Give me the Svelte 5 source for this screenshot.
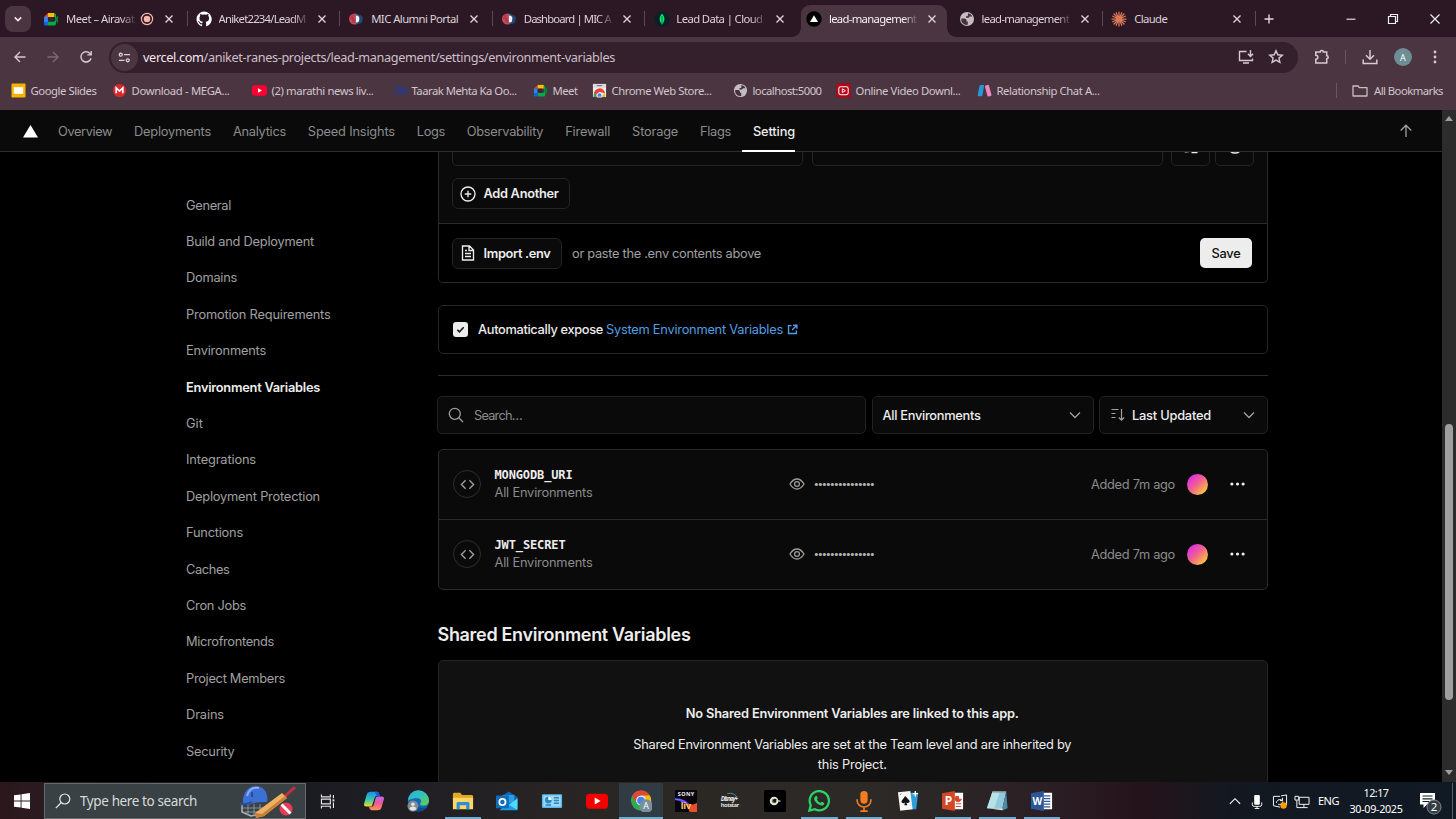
<script>
  // Tracks a text run out to a given width in pixels.
  function fit(node, width) {
    node.style.letterSpacing = '0px';
    const natural = node.getBoundingClientRect().width;
    node.style.letterSpacing = (width - natural) / node.textContent.length + 'px';
  }

  const tabs = [
    { icon: 'meet', title: 'Meet – Airavat', w: 68.5, rec: true },
    { icon: 'github', title: 'Aniket2234/LeadM', w: 87 },
    { icon: 'mic', title: 'MIC Alumni Portal', w: 87 },
    { icon: 'mic', title: 'Dashboard | MIC A', w: 87 },
    { icon: 'mongo', title: 'Lead Data | Cloud', w: 86 },
    { icon: 'vercel', title: 'lead-management', w: 87.5, active: true },
    { icon: 'globe', title: 'lead-management', w: 87.5 },
    { icon: 'claude', title: 'Claude', w: 33 }
  ];
  const bookmarks = [
    { icon: 'slides', title: 'Google Slides', w: 66 },
    { icon: 'mega', title: 'Download - MEGA...', w: 98 },
    { icon: 'youtube', title: '(2) marathi news liv...', w: 102 },
    { icon: 'taarak', title: 'Taarak Mehta Ka Oo...', w: 105 },
    { icon: 'meet', title: 'Meet', w: 25 },
    { icon: 'store', title: 'Chrome Web Store...', w: 100 },
    { icon: 'globe', title: 'localhost:5000', w: 69 },
    { icon: 'video', title: 'Online Video Downl...', w: 105 },
    { icon: 'relation', title: 'Relationship Chat A...', w: 103 }
  ];
  const nav = [
    ['Overview', 54], ['Deployments', 77], ['Analytics', 53], ['Speed Insights', 87], ['Logs', 28],
    ['Observability', 76.5], ['Firewall', 45], ['Storage', 46], ['Flags', 31], ['Setting', 42]
  ];
  const side = [
    ['General', 45], ['Build and Deployment', 128], ['Domains', 51], ['Promotion Requirements', 144.5],
    ['Environments', 80], ['Environment Variables', 134], ['Git', 17], ['Integrations', 70],
    ['Deployment Protection', 134], ['Functions', 57], ['Caches', 43.5], ['Cron Jobs', 60],
    ['Microfrontends', 88], ['Project Members', 99], ['Drains', 38], ['Security', 48.5]
  ];
  const vars = [
    { name: 'MONGODB_URI', w: 78 },
    { name: 'JWT_SECRET', w: 71 }
  ];
  const apps = [
    { icon: 'copilot' }, { icon: 'edge' }, { icon: 'files', open: true }, { icon: 'outlook' },
    { icon: 'panel' }, { icon: 'yt' }, { icon: 'chrome', open: true, focus: true }, { icon: 'sony' },
    { icon: 'hotstar' }, { icon: 'cursor' }, { icon: 'whatsapp', open: true }, { icon: 'voice', open: true },
    { icon: 'cards' }, { icon: 'ppt', open: true }, { icon: 'notes', open: true }, { icon: 'word', open: true }
  ];
</script>

{#snippet favicon(name)}
  <svg class="fav" viewBox="0 0 16 16">
    {#if name === 'meet'}
      <path d="M1 6l4-4v4z" fill="#ea4335" /><path d="M5 2h6.500v4H5z" fill="#fbbc04" />
      <path d="M1 6h4v5H1z" fill="#2684fc" /><path d="M1 11h4v3.500H2.500Q1 14.500 1 13z" fill="#1565d8" />
      <path d="M5 10.500h6.500l1-2.500-1-2V3.500Q13 2 13 4v8.500q0 2-1.500 2H5z" fill="#00ac47" />
      <path d="M11.500 8L15 4.500v8z" fill="#00832d" /><path d="M5 6h5v4.500H5z" fill="#3b2430" />
    {:else if name === 'github'}
      <path fill="#fff" d="M8 .6a7.500 7.500 0 0 0-2.400 14.600c.4.1.5-.2.500-.4v-1.500c-2 .5-2.600-.8-2.700-1.200-.1-.3-.5-1-.9-1.200-.3-.2-.7-.6 0-.6.700 0 1.200.6 1.400.9.800 1.300 2 1 2.500.7.100-.5.300-.9.500-1.100-1.800-.2-3.500-.9-3.500-3.800 0-.8.3-1.500.8-2 0-.2-.3-1 .1-2 0 0 .6-.2 2.100.8a7 7 0 0 1 3.700 0c1.500-1 2.100-.8 2.100-.8.4 1 .1 1.800.1 2 .5.500.8 1.200.8 2 0 2.900-1.800 3.600-3.500 3.800.3.200.5.700.5 1.500v2.500c0 .2.100.5.500.4A7.500 7.500 0 0 0 8 .6z" />
    {:else if name === 'mic'}
      <circle cx="6.500" cy="8" r="5.500" fill="#d04757" /><path d="M8 2.500a5.600 5.600 0 0 1 0 11z" fill="#245a8d" />
      <path d="M8 4.500a3.500 3.500 0 0 1 0 7z" fill="#eef4fa" /><path d="M12 3.500l3 3-1 5-3 1.500z" fill="#1f4972" />
      <path d="M3 4l4 8M5 3v9M2 7l5 2" stroke="#8f3850" stroke-width=".8" />
    {:else if name === 'mongo'}
      <circle cx="8" cy="8" r="7.500" fill="#0a1f27" /><path d="M8 2.500q5 5.500 0 11-5-5.500 0-11z" fill="#00ed64" /><path d="M8 5v9" stroke="#00684a" stroke-width=".8" />
    {:else if name === 'vercel'}
      <circle cx="8" cy="8" r="7.700" fill="#000" /><path d="M8 4.200l4 6.800H4z" fill="#fff" />
    {:else if name === 'globe'}
      <circle cx="8" cy="8" r="7" fill="#c6bdc3" />
      <path d="M2.300 7.500h3.200q2 0 2 2v1h1.300v3.300Q5 14.500 3 11.500 2 9.500 2.300 7.500zM9 2.200q3.200.5 4.400 3.300H11q-1 0-1 1.300H7V5.200h1.300Q9 5 9 4z" fill="#45303c" />
    {:else if name === 'claude'}
      <path d="M8 1v14M1 8h14M3 3l10 10M13 3L3 13M5.200 1.700l5.600 12.600M1.700 5.200l12.600 5.600M10.800 1.700L5.200 14.300M14.300 5.200L1.700 10.800" stroke="#d97757" stroke-width="1.250" stroke-linecap="round" />
    {:else if name === 'slides'}
      <rect x=".5" y=".5" width="15" height="15" rx="1" fill="#f4b400" /><rect x="3" y="4.500" width="10" height="7" fill="#fff" />
    {:else if name === 'mega'}
      <circle cx="8" cy="8" r="7" fill="#d9272e" /><path d="M4.500 11V5.200L8 8.600l3.500-3.400V11" fill="none" stroke="#fff" stroke-width="1.800" />
    {:else if name === 'youtube'}
      <rect x="0" y="2.500" width="16" height="11" rx="3" fill="#f03" /><path d="M6.300 5.500v5L10.700 8z" fill="#fff" />
    {:else if name === 'taarak'}
      <path d="M1 4h5M4 4v7l-2 2M6 6l3 6 2-8 3 2v7M9 5l-1 7M12 7l2 1" stroke="#293a88" stroke-width="1.700" fill="none" />
    {:else if name === 'store'}
      <path d="M1 1h14v14H1z" fill="#eee" /><path d="M1 1h14v4H1z" fill="#dcdcdc" /><rect x="5" y="2" width="6" height="1.500" rx=".7" fill="#8c7c83" />
      <path d="M2 15V12.500a6 6 0 0 1 12-1.500L8 9.500z" fill="#ea4335" /><path d="M2.500 10L6 15H1.500z" fill="#34a853" /><path d="M13.500 10L10 15h4.500z" fill="#fbbc04" /><path d="M5.500 15v-2a2.500 2.500 0 0 1 5 0v2z" fill="#4285f4" stroke="#fff" stroke-width=".8" />
    {:else if name === 'video'}
      <rect x=".5" y=".5" width="15" height="15" fill="#b80018" /><rect x="3" y="4" width="10" height="8.500" rx="2" fill="none" stroke="#fff" stroke-width="1.100" /><path d="M6.700 6.200v4l3.300-2z" fill="none" stroke="#fff" />
    {:else if name === 'relation'}
      <path d="M2.600 3.200Q3 2 4.200 2h2.300q1.300 0 1 1.300L5.800 13q-.3 1.200-1.500 1.200H1.800Q.5 14.200.8 13z" fill="#2499d6" /><path d="M8.600 4.200Q8.200 3 9.300 2.600l2-.6q1.200-.3 1.500.8l2.600 9.500q.3 1.200-.8 1.500l-2 .5q-1.200.3-1.500-.8z" fill="#f088bd" />
    {/if}
  </svg>
{/snippet}

{#snippet cross()}
  <svg class="x" viewBox="0 0 10 10"><path d="M1.500 1.500l7 7M8.500 1.500l-7 7" stroke="#ddd2d9" stroke-width="1.400" /></svg>
{/snippet}

{#snippet chev()}
  <svg width="14" height="14" viewBox="0 0 14 14" fill="none" stroke="#a1a1a1" stroke-width="1.300"><path d="M2 4.500l5 5 5-5" /></svg>
{/snippet}

{#snippet app(name)}
  <svg class="app" viewBox="0 0 24 24">
    {#if name === 'copilot'}
      <defs>
        <linearGradient id="cpA" x1="0" y1="0" x2="0" y2="1"><stop offset="0" stop-color="#1b8ff0" /><stop offset=".5" stop-color="#2fc6b4" /><stop offset="1" stop-color="#e8dc2c" /></linearGradient>
        <linearGradient id="cpB" x1="0" y1="0" x2="0" y2="1"><stop offset="0" stop-color="#b76cf2" /><stop offset=".5" stop-color="#f0559a" /><stop offset="1" stop-color="#fb9a4b" /></linearGradient>
      </defs>
      <path d="M8 2h7q2 0 2.500 2l.6 2.500h-3.200q-1.500 0-2 1.600L10 16.500q-.5 1.500-2.500 1.500H3.500Q.5 18 1.200 15L4 4.800Q4.800 2 8 2z" fill="url(#cpA)" />
      <path d="M13 2h2.500q1.500.4 2 2l.6 2.500h-3.200z" fill="#225fd0" />
      <path d="M16 22H9.500q-2 0-2.500-2l-.5-2h3q1.500 0 2-1.500l2.400-8Q14.400 7 16.400 7H20.500q3 0 2.300 3L20 19.500Q19.200 22 16 22z" fill="url(#cpB)" />
    {:else if name === 'edge'}
      <defs><linearGradient id="edA" x1="0" y1="0" x2="1" y2="1"><stop offset="0" stop-color="#25b3df" /><stop offset=".5" stop-color="#35c1b5" /><stop offset="1" stop-color="#68d13c" /></linearGradient></defs>
      <circle cx="12.500" cy="12" r="11.500" fill="#1267ba" /><path d="M1 12A11.500 11.500 0 0 1 24 11.500c0 4-3 5.500-6 5.500-3.500 0-4.500-1.800-3-3.500.9-1 .7-4-3-4.500C6 8.500 1.500 11 1 12z" fill="url(#edA)" />
      <path d="M9 12c0 6 5 8.500 12 7-3 4-9 5.500-13 2.500s-3-9.500 1-9.500z" fill="#0c4a91" />
      <circle cx="6.500" cy="17.500" r="6" fill="#7f8b91" /><circle cx="6.500" cy="15.500" r="2" fill="#e3e3e3" /><path d="M2.800 21q0-3 3.700-3t3.700 3q-3.700 3-7.400 0z" fill="#e3e3e3" />
    {:else if name === 'files'}
      <path d="M1 4.500Q1 3 2.500 3H9l2 2.500h10.500Q23 5.500 23 7v4H1z" fill="#e5a823" /><path d="M1 8.500h22V21H1z" fill="#ffd766" /><path d="M5 21v-6.500Q5 13 6.500 13h11q1.500 0 1.500 1.500V21h-3.500v-4.500h-7V21z" fill="#2c8fd5" />
    {:else if name === 'outlook'}
      <path d="M4 8L14 1.500 23.500 8v11H4z" fill="#1066b5" /><path d="M7 5.500h13V14H7z" fill="#2a9fe0" /><path d="M4 21.500h19.500V9L14 16z" fill="#50d9ff" /><path d="M4 22l10-6 9.500 6z" fill="#1a9be4" />
      <rect x="0" y="6" width="14" height="14" rx="1" fill="#0f6cbd" /><circle cx="7" cy="13" r="3.400" fill="none" stroke="#fff" stroke-width="1.900" />
    {:else if name === 'panel'}
      <rect x="1" y="4.500" width="22" height="15" rx="1" fill="#5cb6e5" /><rect x="2.500" y="6" width="19" height="12" fill="#9ad8f5" /><circle cx="8" cy="11" r="3.700" fill="#2a89c9" /><path d="M8 11V7.300A3.700 3.700 0 0 1 11.700 11z" fill="#f2f8fb" /><path d="M14 8.500h5.500M14 11.500h5.500M14 14.500h5.500M5 16.300h6" stroke="#2583bd" stroke-width="1.500" />
    {:else if name === 'yt'}
      <rect x="0" y="4" width="24" height="16.500" rx="4" fill="#f40000" /><path d="M9.500 8.300v7.500l6.500-3.700z" fill="#fff" />
    {:else if name === 'chrome'}
      <circle cx="12" cy="11.500" r="11" fill="#34a853" /><path d="M2.500 6A11 11 0 0 1 21.600 6H12z" fill="#ea4335" /><path d="M21.600 6A11 11 0 0 1 12 22.500L16.800 14 12 6z" fill="#fbbc04" /><path d="M2.500 6L7.300 14.500 12 6z" fill="#ea4335" /><circle cx="12" cy="11.500" r="5.300" fill="#fff" /><circle cx="12" cy="11.500" r="4.200" fill="#4285f4" />
      <circle cx="17.500" cy="17.500" r="7.500" fill="#78909c" /><text x="17.500" y="21" text-anchor="middle" font-size="9.500" fill="#fff">A</text>
    {:else if name === 'sony'}
      <rect x="0" y="0" width="24" height="24" fill="#08050f" /><text x="12" y="7" text-anchor="middle" font-size="6" font-weight="700" fill="#eee" textLength="18">SONY</text>
      <path d="M0 9q10 0 14 5 4 4 10 1v9H17Q13 13 0 11z" fill="#7a2be5" /><path d="M12 14q7 4 12 0v10h-8z" fill="#e74f2d" /><path d="M0 10q8 0 13 5" stroke="#36a0ff" fill="none" /><text x="12" y="21" text-anchor="middle" font-size="10" font-weight="700" fill="#ffc95c">liv</text>
    {:else if name === 'hotstar'}
      <text x="11.500" y="12.500" text-anchor="middle" font-size="7" font-weight="700" font-style="italic" fill="#e3e3e3" textLength="19">Disney+</text><text x="12" y="19" text-anchor="middle" font-size="6.500" font-weight="700" fill="#ddd" textLength="20">hotstar</text><path d="M9 4q8-2 11 5" stroke="#3d9bb3" fill="none" />
    {:else if name === 'cursor'}
      <rect x="0" y="0" width="24" height="24" rx="2" fill="#000" /><circle cx="11" cy="12" r="3.600" fill="#6d7a3d" stroke="#e6e6dc" stroke-width="2.200" /><circle cx="12" cy="11.500" r="2" fill="#111" /><path d="M13 12h5" stroke="#eee" stroke-width="1.200" />
    {:else if name === 'whatsapp'}
      <path d="M1.500 22.500l1.500-6A10.500 10.500 0 1 1 7.500 21z" fill="none" stroke="#2bd366" stroke-width="2.400" /><path d="M8.300 6.500c.8-.5 1.200-.2 1.500.6l.7 1.700c.2.600-.8 1.200-.7 1.600.7 1.700 2 2.900 3.800 3.600.5.100 1-.9 1.600-1.100l2.100 1c.6.300.4 1.400-.2 2.100-1.600 1.700-4.200.8-6.400-.7s-4.400-4.200-4-6.300c.2-1 .8-1.900 1.600-2.500z" fill="#2bd366" />
    {:else if name === 'voice'}
      <rect x="8" y="1" width="8" height="14" rx="4" fill="#f47b20" /><path d="M4.500 10v1.500a7.500 7 0 0 0 15 0V10M12 18.500V23M8 23h8" fill="none" stroke="#f47b20" stroke-width="1.800" />
    {:else if name === 'cards'}
      <path d="M9 3h14l-2 18H9z" fill="#2e9edb" /><path d="M1 2.500L14.500 1 17 21 3.500 22.500z" fill="#f6f6f6" /><path d="M9 6.500l4.500 5c1 2-1.500 3.500-3.300 2l1 3H8l.6-3c-1.500 1.800-4.300.6-3.600-1.500z" fill="#111" /><path d="M20 1v6M17 4h6" stroke="#fff" stroke-width="1.500" /><path d="M3.500 5l1-1" stroke="#111" />
    {:else if name === 'ppt'}
      <path d="M12 3h11v18H12z" fill="#fff" /><path d="M15 7h3v3h3a3.500 3.500 0 1 1-6-3zM15 15h6M15 18h6" fill="#d24726" stroke="#d24726" /><path d="M0 3.500L14 1v22L0 20.500z" fill="#d24726" /><text x="7" y="16.500" text-anchor="middle" font-size="13" font-weight="700" fill="#fff">P</text>
    {:else if name === 'notes'}
      <path d="M7 2h15l-4 18H1z" fill="#92cadb" /><path d="M7 2h8L9 20H1z" fill="#b7e2e8" /><path d="M1 20h17l4-18 1.500 18-5 2z" fill="#4a8aa8" /><path d="M2 20h16v2z" fill="#e5e9dd" /><path d="M7 2h15" stroke="#8c9594" stroke-width="1.500" />
    {:else if name === 'word'}
      <path d="M12 3h11v18H12z" fill="#fff" /><path d="M14 6.500h7M14 9.500h7M14 12.500h7M14 15.500h7M14 18.500h7" stroke="#2b579a" stroke-width="1.300" /><path d="M0 3.500L14 1v22L0 20.500z" fill="#2b579a" /><text x="7" y="16" text-anchor="middle" font-size="11" font-weight="700" fill="#fff">W</text>
    {/if}
  </svg>
{/snippet}

<div class="screen">
  <header class="chrome">
    <div class="strip">
      <div class="tabsearch"><svg width="10" height="10" viewBox="0 0 10 10"><path d="M1.800 3.400L5 6.600l3.200-3.200" fill="none" stroke="#f0e6ec" stroke-width="1.600" /></svg></div>
      <div class="tabs">
        {#each tabs as t, i}
          <div class="tab" class:active={t.active} class:line={i !== 4 && i !== 5}>
            {@render favicon(t.icon)}
            <div class="title"><span use:fit={t.w}>{t.title}</span></div>
            {#if t.rec}
              <svg class="rec" viewBox="0 0 14 14"><circle cx="7" cy="7" r="5.600" fill="none" stroke="#f4b5ab" stroke-width="1.200" /><circle cx="7" cy="7" r="3.300" fill="#f4b5ab" /></svg>
            {/if}
            {@render cross()}
          </div>
        {/each}
      </div>
      <svg class="plus" viewBox="0 0 12 12"><path d="M6 1.500v9M1.500 6h9" stroke="#e3d8df" stroke-width="1.400" /></svg>
      <div class="win">
        <svg viewBox="0 0 12 12"><path d="M1.500 6.200h9" stroke="#eee" stroke-width="1.100" /></svg>
        <svg viewBox="0 0 12 12"><path d="M1.500 3.500h7v7h-7zM3.500 3.500v-2h7v7h-2" fill="none" stroke="#eee" stroke-width="1.200" /></svg>
        <svg viewBox="0 0 12 12"><path d="M1.500 1.500l9 9M10.500 1.500l-9 9" stroke="#eee" stroke-width="1.200" /></svg>
      </div>
    </div>
    <div class="toolbar">
      <div class="arrows">
        <svg viewBox="0 0 16 16" stroke="#d6c9d1"><path d="M13.500 8H3M8 3L3 8l5 5" /></svg>
        <svg viewBox="0 0 16 16" stroke="#7d6a75"><path d="M2.500 8H13M8 3l5 5-5 5" /></svg>
        <svg viewBox="0 0 16 16" stroke="#d6c9d1"><path d="M13 9.200A5.100 5.100 0 1 1 11.700 4.300L13 5.600M13.200 2v3.900H9.300" /></svg>
      </div>
      <div class="omni">
        <div class="info"><svg viewBox="0 0 14 14"><path d="M6.500 4H13M1 10h6" /><circle cx="3" cy="4" r="1.600" /><circle cx="10.500" cy="10" r="1.600" /></svg></div>
        <span class="url" use:fit={472}><b>vercel.com</b>/aniket-ranes-projects/lead-management/settings/environment-variables</span>
        <svg class="oi push" viewBox="0 0 16 16"><path d="M8.500 2.500h-7v9h13V9.500M5 14h6M12.500 1v6M9.900 4.800l2.600 2.600 2.600-2.600" /></svg>
        <svg class="oi" viewBox="0 0 16 16"><path d="M8 1.800l1.800 4 4.400.4-3.300 2.900 1 4.300L8 11.100l-3.900 2.300 1-4.300-3.300-2.900 4.400-.4z" /></svg>
      </div>
      <div class="tools">
        <svg viewBox="0 0 16 16"><path d="M1.800 3h4.400a1.600 1.600 0 0 1 3.200 0h3.300v3.700a1.500 1.500 0 0 1 0 3v4.300H1.800v-3.800a2 2 0 0 0 0-4z" /></svg>
        <i></i>
        <svg viewBox="0 0 16 16"><path d="M8 1v9M4 6.300l4 4 4-4M1.200 10.500v4h13.600v-4" /></svg>
        <span class="avatar">A</span>
        <svg class="kebab" viewBox="0 0 16 16"><circle cx="8" cy="3" r="1.400" /><circle cx="8" cy="8" r="1.400" /><circle cx="8" cy="13" r="1.400" /></svg>
      </div>
    </div>
    <div class="bookmarks">
      {#each bookmarks as b}
        <div class="bm">{@render favicon(b.icon)}<span use:fit={b.w}>{b.title}</span></div>
      {/each}
      <div class="all">
        <svg viewBox="0 0 16 14"><path d="M1 2h5l1.500 1.700H15V12H1z" fill="none" stroke="#c9bcc4" stroke-width="1.300" stroke-linejoin="round" /></svg>
        <span use:fit={69}>All Bookmarks</span>
      </div>
    </div>
  </header>

  <div class="view">
    <div class="page">
      <nav>
        <svg class="logo" viewBox="0 0 15 13"><path d="M7.500 0L15 12.500H0z" fill="#fff" /></svg>
        {#each nav as [label, w], i}
          <span class="item" class:on={i === nav.length - 1}><span use:fit={w}>{label}</span></span>
        {/each}
        <svg class="up" viewBox="0 0 14 14"><path d="M7 13V1.500M1.700 6.500L7 1.200l5.300 5.300" fill="none" stroke="#a0a0a0" stroke-width="1.300" /></svg>
      </nav>
      <div class="cols">
        <aside>
          {#each side as [label, w]}
            <div class:cur={label === 'Environment Variables'}><span use:fit={w}>{label}</span></div>
          {/each}
        </aside>
        <main>
          <section class="editor">
            <div class="upper">
              <div class="fields">
                <div class="field"></div>
                <div class="field"></div>
                <div class="sq"><svg viewBox="0 0 16 16"><path d="M4 2v8.500M1.800 12.700l3.200-.2v-3" /><path d="M8.500 13.300h6" stroke-width="2" /></svg></div>
                <div class="sq"><svg viewBox="0 0 16 16"><circle cx="8" cy="7.500" r="6.600" /><path d="M5 7.500h6" /></svg></div>
              </div>
              <div class="btn">
                <svg viewBox="0 0 16 16"><circle cx="8" cy="8" r="7" /><path d="M8 4.800v6.400M4.800 8h6.400" /></svg>
                <span use:fit={75}>Add Another</span>
              </div>
            </div>
            <div class="lower">
              <div class="btn">
                <svg viewBox="0 0 16 16"><path d="M2.500 1h7L13.500 5v10h-11zM9 1v4.500h4.500M5 5.500h2M5 8.500h6M5 11.500h6" /></svg>
                <span use:fit={67}>Import .env</span>
              </div>
              <span class="hint" use:fit={189}>or paste the .env contents above</span>
              <div class="save"><span use:fit={29}>Save</span></div>
            </div>
          </section>

          <section class="expose">
            <div class="check"><svg viewBox="0 0 14 14"><path d="M4 7.300l2 1.900 4-4.300" fill="none" stroke="#111" stroke-width="1.400" /></svg></div>
            <span use:fit={125}>Automatically expose</span>
            <a href="#docs"><span use:fit={177}>System Environment Variables</span>
              <svg viewBox="0 0 12 12"><path d="M5 1.800H1.700v8.500h8.500V7M6.800 1.300h4v4M10.500 1.600L5.500 6.600" /></svg></a>
          </section>

          <hr />

          <div class="filters">
            <div class="box search">
              <svg viewBox="0 0 16 16"><circle cx="6.800" cy="6.800" r="5.500" /><path d="M10.800 10.800L15 15" /></svg>
              <span use:fit={48}>Search…</span>
            </div>
            <div class="box"><span use:fit={98}>All Environments</span>{@render chev()}</div>
            <div class="box">
              <svg class="sort" viewBox="0 0 14 14"><path d="M.5 1.500h7M.5 5.500h4M.5 9.500h4M10.500 1v11M7.800 9.500l2.700 2.700 2.700-2.700" /></svg>
              <span use:fit={79}>Last Updated</span>{@render chev()}
            </div>
          </div>

          <section class="list">
            {#each vars as v}
              <div class="row">
                <div class="code"><svg viewBox="0 0 16 16"><path d="M6 3.500L1.500 8 6 12.500M10 3.500L14.500 8 10 12.500" /></svg></div>
                <div class="name"><strong><span use:fit={v.w}>{v.name}</span></strong><small><span use:fit={98}>All Environments</span></small></div>
                <svg class="eye" viewBox="0 0 16 16"><path d="M1 8q3-5 7-5t7 5q-3 5-7 5T1 8z" /><circle cx="8" cy="8" r="2.400" /></svg>
                <span class="dots"><span use:fit={60}>•••••••••••••••</span></span>
                <span class="added" use:fit={84}>Added 7m ago</span>
                <i class="grad"></i>
                <svg class="more" viewBox="0 0 16 16"><circle cx="2" cy="8" r="1.700" /><circle cx="8" cy="8" r="1.700" /><circle cx="14" cy="8" r="1.700" /></svg>
              </div>
            {/each}
          </section>

          <h2><span use:fit={253}>Shared Environment Variables</span></h2>
          <section class="shared">
            <strong><span use:fit={333}>No Shared Environment Variables are linked to this app.</span></strong>
            <p><span use:fit={438}>Shared Environment Variables are set at the Team level and are inherited by</span><span use:fit={69}>this Project.</span></p>
          </section>
        </main>
      </div>
    </div>
    <div class="scroll">
      <svg viewBox="0 0 8 6"><path d="M4 0l4 5H0z" /></svg>
      <div class="thumb"></div>
      <svg viewBox="0 0 8 6"><path d="M4 5l4-5H0z" /></svg>
    </div>
  </div>

  <footer class="taskbar">
    <div class="start"><svg viewBox="0 0 16 16"><path d="M0 2.300L6.600 1.400v6.100H0zM7.500 1.300L16 0v7.500H7.500zM0 8.500h6.600v6.100L0 13.700zM7.500 8.500H16V16l-8.500-1.300z" fill="#fff" /></svg></div>
    <div class="find">
      <svg class="lens" viewBox="0 0 16 16"><circle cx="9.800" cy="6" r="5" fill="none" stroke="#e8e8e8" stroke-width="1.200" /><path d="M6.300 9.500L.8 15.200" stroke="#e8e8e8" stroke-width="1.200" /></svg>
      <span use:fit={117}>Type here to search</span>
      <svg class="cricket" viewBox="0 0 56 33">
        <path d="M2 20v7l9 4 11-2 5-9" fill="none" stroke="#aab4ba" stroke-width="1.500" /><path d="M3 23h20M5 27h18M8 19v11M14 19v12M20 19v10" stroke="#8e999f" stroke-width=".9" />
        <path d="M3 19C2 8 8 1 16 1s13 8 11 16q-12 0-16 2t-8 0z" fill="#3d70d4" /><path d="M7 11C9 4 14 2 19 3" fill="none" stroke="#86afff" stroke-width="2" /><path d="M12 7v5M0 19q7 1 12-2" stroke="#2a4b98" stroke-width="2" fill="none" />
        <path d="M44 12L54 3" stroke="#c42f3c" stroke-width="3" stroke-linecap="round" /><path d="M42 8l5 5-23 18-8 2-1-5z" fill="#eeb063" /><path d="M15 28l1 5 8-2 23-18-2-2L22 29z" fill="#c97f35" />
        <circle cx="46" cy="24" r="6.500" fill="#e63d55" /><path d="M41.500 19.500l9 9" stroke="#fff" stroke-width="3" />
      </svg>
    </div>
    <div class="tv"><svg viewBox="0 0 16 16" fill="none" stroke="#e6e6e6" stroke-width="1.200"><path d="M1 .5v2.500h9.500V.5M1 5.500h9.500v5H1zM1 15.500V13h9.500v2.500M13.800 1v3.500M13.800 9v6" /><path d="M12.800 6.800h2" stroke-width="2.200" /></svg></div>
    <div class="apps">
      {#each apps as a}
        <div class="cell" class:open={a.open} class:focus={a.focus}>{@render app(a.icon)}</div>
      {/each}
    </div>
    <div class="tray">
      <svg viewBox="0 0 14 16"><path d="M1.500 10.500L7 5l5.500 5.500" fill="none" stroke="#fff" stroke-width="1.200" /></svg>
      <svg viewBox="0 0 14 16"><rect x="4" y="1" width="6" height="10.500" rx="1" fill="#fff" /><path d="M2 9v2.500q0 1.700 2 1.700h6q2 0 2-1.700V9M7 13v2.500M4.500 15.500h5" fill="none" stroke="#fff" /></svg>
      <svg viewBox="0 0 16 16"><path d="M1 2.500h7M1 2.500v10L8 14M9 2l6-1v11M4 9.500q1-4 5-3.500l1.500 1M10.700 4v3H8M11 8q-1 4-5 3" fill="none" stroke="#fff" /><circle cx="11.800" cy="12.300" r="3.400" fill="#ff9b0b" /></svg>
      <svg viewBox="0 0 16 16"><path d="M5 3.500h10.500V11H5zM10 11v3M6 14.500h8M2.500 7v7.500h4M.5 2.500h4v4h-4z" fill="none" stroke="#fff" /></svg>
      <span class="eng" use:fit={21}>ENG</span>
      <div class="clock"><span><span use:fit={25}>12:17</span></span><span><span use:fit={53}>30-09-2025</span></span></div>
      <svg class="note" viewBox="0 0 24 24"><path d="M1 2h15v11.500H8L4.500 17v-3.500H1z" fill="#fff" /><path d="M3.500 5h10M3.500 7.800h10M3.500 10.500h7" stroke="#17202b" stroke-width="1.200" /><circle cx="15" cy="16" r="7" fill="#333c43" stroke="#7d878d" /><text x="15" y="20" font-size="11.500" text-anchor="middle" fill="#fff">2</text></svg>
      <i></i>
    </div>
  </footer>
</div>

<style>
  :global(body) { margin: 0; background: #000; overflow: hidden; }
  .screen { width: 1456px; height: 819px; display: flex; flex-direction: column; font-family: "Noto Sans", "Open Sans", sans-serif; font-size: 11.500px; overflow: hidden; }
  .screen :global(*) { box-sizing: border-box; }
  span { white-space: nowrap; }
  svg { flex: none; display: block; }

  .chrome { height: 110px; background: #4a3541; color: #ddd2d9; }
  .strip { height: 37px; background: #2c1824; display: flex; align-items: center; }
  .tabsearch { width: 26px; height: 26px; margin: 0 5px; border-radius: 8px; background: #4a3541; display: grid; place-items: center; }
  .tabs { display: grid; grid-template-columns: repeat(8, 152.600px); height: 100%; }
  .tab { display: flex; align-items: center; padding-left: 7.200px; padding-right: 14.400px; position: relative; font-size: 11.300px; }
  .tab.line::after { content: ""; position: absolute; right: 1px; top: 11px; width: 1px; height: 15px; background: #5d4855; }
  .tab > * { position: relative; z-index: 1; }
  .fav { width: 16px; height: 16px; }
  .title { margin-left: 6.800px; flex: 1; margin-right: 10px; mask-image: linear-gradient(90deg, #000 calc(100% - 14px), rgba(0, 0, 0, .15)); }
  .tab:nth-child(3) .title, .tab:nth-child(8) .title { mask-image: none; }
  .rec { width: 14px; height: 14px; margin-right: 10px; margin-left: -4.500px; }
  .x { width: 10px; height: 10px; }
  .tab.active { color: #f7edf3; }
  .tab.active::before { content: ""; position: absolute; z-index: 0; left: 2px; right: 5px; top: 5px; bottom: 0; background: #4a3541; border-radius: 9px 9px 0 0; }
  .tab.active::after { content: ""; position: absolute; z-index: 0; left: -7px; right: -4px; bottom: 0; height: 9px; background: radial-gradient(circle at 0 0, transparent 8.500px, #4a3541 9px) left / 9px 9px no-repeat, radial-gradient(circle at 100% 0, transparent 8.500px, #4a3541 9px) right / 9px 9px no-repeat; }
  .plus { width: 12px; height: 12px; margin-left: 6px; }
  .win { margin-left: auto; display: grid; grid-template-columns: repeat(3, 42px); justify-items: center; }
  .win svg { width: 12px; height: 12px; }

  .toolbar { height: 41px; display: flex; align-items: center; padding: 0 12px 1px; }
  .arrows { display: flex; gap: 17px; margin-right: 15px; }
  .arrows svg { width: 16px; height: 16px; fill: none; stroke-width: 1.400; }
  .omni { width: 1189px; height: 31px; border-radius: 16px; background: #34202c; display: flex; align-items: center; padding: 0 14px 0 2px; }
  .info { width: 27px; height: 27px; border-radius: 50%; background: #4a3541; display: grid; place-items: center; margin-right: 5px; }
  .info svg { width: 13px; height: 13px; fill: none; stroke: #ddd2d9; stroke-width: 1.400; }
  .url { font-size: 12.700px; color: #cdbfc8; }
  .url b { font-weight: 400; color: #f2e7ee; }
  .oi { width: 16px; height: 16px; fill: none; stroke: #d6c9d1; stroke-width: 1.400; margin-left: 14px; }
  .oi.push { margin-left: auto; }
  .tools { display: flex; align-items: center; flex: 1; padding-left: 16px; }
  .tools svg { width: 16px; height: 16px; fill: none; stroke: #d6c9d1; stroke-width: 1.500; }
  .tools i { width: 1px; height: 14px; background: #6b5562; margin: 0 16px 0 15px; }
  .avatar { width: 18px; height: 18px; border-radius: 50%; background: #6d8e94; color: #fff; font-size: 9px; display: grid; place-items: center; margin: 0 15px 0 16px; }
  .tools .kebab { fill: #d6c9d1; stroke: none; }

  .bookmarks { height: 27px; display: grid; grid-template-columns: 101px 140px 142px 139px 59px 141px 103px 141px 359px 1fr; padding: 0 0 2px 10.500px; align-items: center; font-size: 11.300px; color: #d3c6ce; }
  .bm { display: flex; align-items: center; gap: 5px; height: 16px; }
  .bm .fav { width: 15px; height: 15px; }
  .bm:nth-child(4) { margin-left: -1px; }
  .bm:nth-child(4) span { margin-left: -1px; }
  .all { display: flex; align-items: center; gap: 6.500px; padding-left: 15px; border-left: 1px solid #6b5562; height: 15px; }
  .all svg { width: 16px; height: 14px; }

  .view { height: 672px; display: flex; font-family: Inter, "Liberation Sans", sans-serif; font-size: 12.800px; color: #a1a1a1; }
  .page { width: 1442px; height: 672px; overflow: hidden; background: #000; }
  nav { height: 42px; background: #0a0a0a; border-bottom: 1px solid #2e2e2e; display: flex; align-items: center; padding: 0 29px 0 23px; gap: 21.950px; color: #8c8c8c; }
  .logo { width: 15px; height: 13px; margin: 1px -1.900px 0 0; }
  .item { height: 41px; display: flex; align-items: center; padding-top: 1px; }
  .item.on { color: #ededed; font-weight: 500; margin-left: -11px; padding-left: 11px; box-shadow: 0 1px #fff, inset 0 -1px #fff; }
  .up { width: 14px; height: 14px; margin-left: auto; }
  .cols { display: flex; height: 630px; }
  aside { width: 437px; padding: 35px 0 0 186px; flex: none; }
  aside div { height: 36.400px; display: flex; align-items: center; }
  .cur { color: #ededed; font-weight: 600; }
  main { width: 831px; flex: none; }

  .editor { margin-left: 1px; width: 830px; height: 131px; border: 1px solid #2b2b2b; border-top: 0; border-radius: 0 0 5px 5px; overflow: hidden; }
  .upper { height: 72px; background: #0a0a0a; border-bottom: 1px solid #2b2b2b; padding: 0 13px; }
  .fields { height: 14px; overflow: hidden; display: grid; grid-template: 14px / 351px 351px 38px 38px; column-gap: 9px; align-items: end; margin-bottom: 12.400px; }
  .field, .sq { height: 38px; border: 1px solid #242424; border-radius: 5px; background: #0a0a0a; }
  .sq { margin-left: -1px; width: 39px; display: grid; place-items: center; }
  .sq:last-child { margin-left: -4px; }
  .sq svg { width: 16px; height: 16px; stroke: #ededed; fill: none; stroke-width: 1.500; }
  .btn { width: max-content; height: 31px; border: 1px solid #242424; border-radius: 6px; background: #0a0a0a; display: flex; align-items: center; gap: 7.500px; padding: 0 10.500px 0 7px; color: #ededed; font-weight: 600; }
  .btn svg { width: 16px; height: 16px; fill: none; stroke: #ededed; stroke-width: 1.350; }
  .lower { height: 58px; display: flex; align-items: center; padding: 0 15px 0 13px; background: #000; }
  .hint { margin-left: 10px; }
  .save { margin-left: auto; width: 52px; height: 30px; border-radius: 5px; background: #ededed; color: #111; font-weight: 500; display: grid; place-items: center; }

  .expose { margin: 22px 0 0 1px; width: 830px; height: 49px; border: 1px solid #262626; border-radius: 5px; display: flex; align-items: center; padding-left: 14px; color: #ededed; font-weight: 500; }
  .check { width: 15px; height: 15px; border-radius: 3px; background: #ededed; margin-right: 10px; }
  .expose a { color: #529fe6; text-decoration: none; font-weight: 400; display: flex; align-items: center; gap: 4px; margin-left: 3px; }
  .expose a svg { width: 11px; height: 11px; fill: none; stroke: #529fe6; stroke-width: 1.500; }
  hr { border: 0; height: 1px; background: #2b2b2b; margin: 21px 0 20px 1px; }

  .filters { display: grid; grid-template-columns: 429px 222px 169px; justify-content: space-between; margin-bottom: 15px; }
  .box { height: 38px; border: 1px solid #222; border-radius: 5px; background: #0a0a0a; display: flex; align-items: center; justify-content: space-between; padding: 0 11px 0 10px; color: #ededed; font-weight: 500; }
  .search { justify-content: flex-start; gap: 10px; color: #8c8c8c; font-weight: 400; }
  .search svg { width: 16px; height: 16px; fill: none; stroke: #9c9c9c; stroke-width: 1.300; }
  .sort { width: 14px; height: 14px; fill: none; stroke: #a1a1a1; stroke-width: 1.200; margin: 0 7px 0 1px; }
  .box:last-child span { margin-right: auto; }

  .list { margin-left: 1px; width: 830px; border: 1px solid #2b2b2b; border-radius: 5px; background: #0a0a0a; }
  .row { height: 69px; display: flex; align-items: center; padding: 0 22px 1px 14px; color: #8c8c8c; }
  .row + .row { border-top: 1px solid #2b2b2b; height: 70px; }
  .code { width: 28px; height: 28px; border: 1px solid #2e2e2e; border-radius: 50%; display: grid; place-items: center; margin-right: 13.500px; }
  .code svg { width: 15px; height: 15px; fill: none; stroke: #a1a1a1; stroke-width: 1.400; }
  .name { width: 294.500px; display: flex; flex-direction: column; padding-bottom: 1px; }
  .name strong { font: 700 12px/17px "DejaVu Sans Mono", monospace; color: #ededed; }
  .name small { font-size: 12.800px; line-height: 17px; }
  .eye { width: 16px; height: 16px; fill: none; stroke: #9c9c9c; stroke-width: 1.300; }
  .dots { margin-left: 8.500px; font-size: 10px; color: #b0b0b0; padding-bottom: 3px; }
  .added { margin-left: auto; }
  .grad { width: 21px; height: 21px; border-radius: 50%; margin: 0 22px 0 12px; background: linear-gradient(135deg, #df35dc 18%, #f0628f 48%, #f9c23e 85%); }
  .more { width: 15px; height: 16px; fill: #ededed; }

  h2 { margin: 32px 0 12px; height: 26px; line-height: 25px; font-size: 18px; font-weight: 600; color: #ededed; padding-left: .5px; }
  .shared { margin-left: 1px; width: 830px; height: 160px; border: 1px solid #242424; border-radius: 5px; background: #111; padding: 43px 1.500px 0 0; text-align: center; color: #ededed; line-height: 20px; }
  .shared strong { font-weight: 600; display: block; margin-bottom: 11px; }
  .shared p { margin: 0; display: flex; flex-direction: column; align-items: center; }

  .scroll { width: 14px; background: #2c2c2c; display: flex; flex-direction: column; align-items: center; padding: 6px 0; }
  .scroll svg { width: 8px; height: 6px; fill: #9f9f9f; }
  .thumb { width: 8px; height: 276px; border-radius: 4px; background: #9f9f9f; margin: 302px 0 auto; }

  .taskbar { height: 37px; padding-top: 1px; display: flex; background: linear-gradient(90deg, #2b171c 0, #2a1b20 43px, #1b1b22 310px, #242124 480px, #2b2723 640px, #2c2a27 860px, #2b2025 1040px, #25131a 1140px, #131820 1230px, #101a25 1456px); color: #fff; }
  .start { width: 43.500px; display: grid; place-items: center; }
  .start svg { width: 16px; height: 16px; }
  .find { width: 262px; border: 1px solid #656a6d; background: #3a4144; display: flex; align-items: center; font-size: 13.500px; color: #d7d9da; padding-left: 10px; }
  .lens { width: 16px; height: 16px; margin-right: 9.500px; }
  .cricket { width: 56px; height: 33px; margin-left: auto; margin-right: 9px; }
  .tv { width: 46px; display: grid; place-items: center; padding-right: 1px; }
  .tv svg { width: 16px; height: 15px; }
  .apps { display: grid; grid-template-columns: repeat(16, 44.550px); }
  .cell { display: grid; place-items: center; position: relative; }
  .app { width: 22px; height: 22px; }
  .open::after { content: ""; position: absolute; bottom: 0; left: 4px; right: 4px; height: 2px; background: #76a9c6; }
  .focus { background: #303b43; }
  .focus::after { left: 0; right: 0; }
  .tray { margin-left: auto; display: flex; align-items: center; }
  .tray > svg { width: 14px; height: 15px; margin-right: 8px; }
  .tray > svg:nth-child(3) { width: 16px; margin-right: 6px; }
  .tray > svg:nth-child(4) { width: 16px; }
  .eng { font-size: 11px; margin-right: 10px; padding-bottom: 1px; }
  .clock { width: 54px; display: flex; flex-direction: column; align-items: center; font-size: 10.800px; line-height: 16px; padding-bottom: 1px; }
  .tray > .note { width: 24px; height: 24px; margin: 4px 9px 0 16px; }
  .tray i { width: 1px; height: 36px; background: #56606a; margin-right: 3px; }
</style>
